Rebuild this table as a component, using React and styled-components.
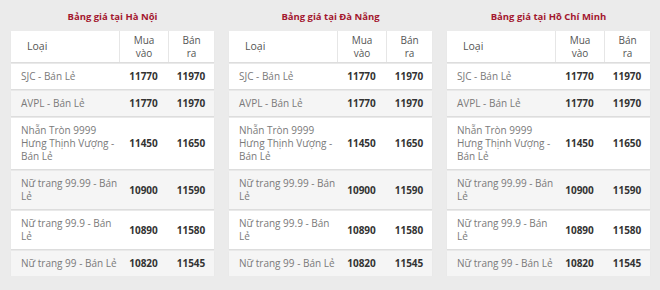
import styled, { createGlobalStyle } from 'styled-components';

const Global = createGlobalStyle`
    body{
        margin: 0;
        background: #ebebeb;
        font-family: 'Open Sans', 'Noto Sans', sans-serif;
    }
`

const cities = ['Hà Nội', 'Đà Nẵng', 'Hồ Chí Minh']

const prices = [
    { name: 'SJC - Bán Lẻ', buy: '11770', sell: '11970' },
    { name: 'AVPL - Bán Lẻ', buy: '11770', sell: '11970' },
    { name: 'Nhẫn Tròn 9999 Hưng Thịnh Vượng - Bán Lẻ', buy: '11450', sell: '11650' },
    { name: 'Nữ trang 99.99 - Bán Lẻ', buy: '10900', sell: '11590' },
    { name: 'Nữ trang 99.9 - Bán Lẻ', buy: '10890', sell: '11580' },
    { name: 'Nữ trang 99 - Bán Lẻ', buy: '10820', sell: '11545' },
]

function PriceTable({ city }){
    return (
        <Board>
            <Title>Bảng giá tại {city}</Title>
            <Head>
                <HeadCell className='name'>Loại</HeadCell>
                <HeadCell>Mua<br/>vào</HeadCell>
                <HeadCell>Bán<br/>ra</HeadCell>
            </Head>
            {prices.map((p, i) => (
                <Row key={p.name} $odd={i % 2 === 1}>
                    <Name>{p.name}</Name>
                    <Value>{p.buy}</Value>
                    <Value>{p.sell}</Value>
                </Row>
            ))}
        </Board>
    )
}

export default function App(){
    return (
        <>
            <Global/>
            <Main>
                {cities.map(c => <PriceTable key={c} city={c}/>)}
            </Main>
        </>
    )
}

const Main = styled.main`
    display: flex;
    gap: 15px;
    padding: 9px 0 0 11px;
`

const Board = styled.section`
    width: 203px;
    display: flex;
    flex-direction: column;
    gap: 2px;
`

const Title = styled.h2`
    margin: 0 0 4px 0;
    height: 16px;
    text-align: center;
    font-size: 9.5px;
    line-height: 16px;
    font-weight: 700;
    color: #a3172f;
`

const cols = `
    display: grid;
    grid-template-columns: 108px 49px 46px;
`

const Head = styled.div`
    ${cols}
    background: #ffffff;
    height: 31px;
    box-shadow: 0 1px 1px rgba(0,0,0,0.06);
`

const HeadCell = styled.div`
    display: flex;
    align-items: center;
    justify-content: center;
    text-align: center;
    font-size: 10px;
    line-height: 13px;
    color: #555555;
    border-left: 1px solid #e6e6e6;

    &.name{
        justify-content: flex-start;
        padding-left: 16px;
        font-size: 10.5px;
        border-left: none;
    }
`

const Row = styled.div`
    ${cols}
    background: ${p => p.$odd ? '#f5f5f5' : '#ffffff'};
    box-shadow: 0 1px 1px rgba(0,0,0,0.06);
    padding: 6px 0;
`

const Name = styled.div`
    padding: 0 1px 0 10px;
    font-size: 10px;
    line-height: 13px;
    color: #7a7a7a;
`

const Value = styled.div`
    display: flex;
    align-items: center;
    justify-content: center;
    font-size: 10px;
    line-height: 13px;
    font-weight: 700;
    color: #333333;
`
